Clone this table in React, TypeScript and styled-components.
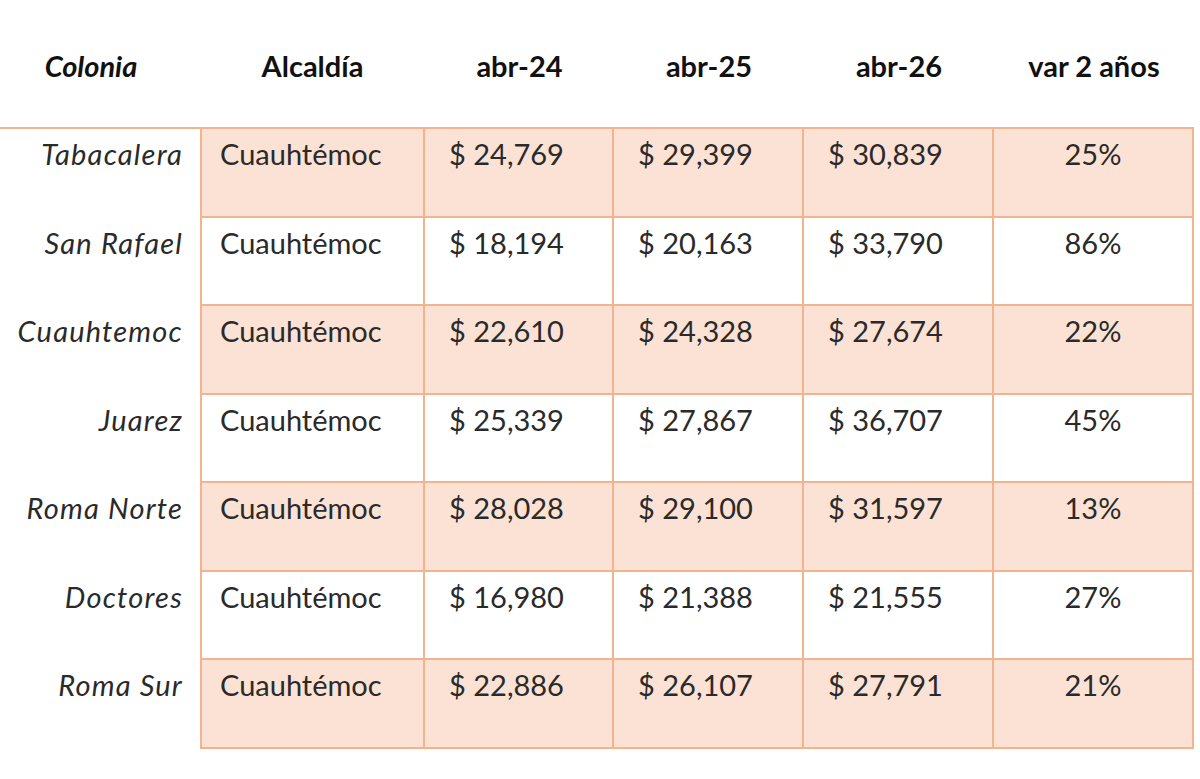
import React from "react";
import styled, { createGlobalStyle, css } from "styled-components";

const Global = createGlobalStyle`
  html, body { margin: 0; padding: 0; background: #ffffff; }
  body { font-family: Lato, "Open Sans", sans-serif; }
`;

const LINE = "#F2B48F";
const FILL = "#FBE2D5";

const Page = styled.div`
  width: 1200px;
  height: 779px;
  background: #fff;
  overflow: hidden;
`;

const Table = styled.div`
  display: grid;
  grid-template-columns: 200px 225px 189px 190px 190px 200px;
  grid-template-rows: 129px repeat(7, 88.5px);
  width: 1194px;
  color: #2a2a2a;
`;

const HeadCell = styled.div<{ $italic?: boolean; $shift?: number }>`
  display: flex;
  align-items: center;
  justify-content: center;
  box-sizing: border-box;
  border-bottom: 2px solid ${LINE};
  padding-top: 4px;
  font-size: 29px;
  font-weight: 700;
  color: #111;
  font-style: ${(p) => (p.$italic ? "italic" : "normal")};
  ${(p) => p.$shift && css`padding-right: ${p.$shift}px;`}
`;

const NameCell = styled.div`
  box-sizing: border-box;
  padding: 7px 17px 0 0;
  text-align: right;
  font-size: 29px;
  font-style: italic;
  letter-spacing: 1.2px;
  line-height: 36px;
`;

const DataCell = styled.div<{ $shade: boolean; $align: "left" | "center"; $first?: boolean; $pad: number }>`
  box-sizing: border-box;
  padding: 7px 0 0 ${(p) => p.$pad}px;
  background: ${(p) => (p.$shade ? FILL : "#fff")};
  border-right: 2px solid ${LINE};
  border-bottom: 2px solid ${LINE};
  ${(p) => p.$first && css`border-left: 2px solid ${LINE};`}
  text-align: ${(p) => p.$align};
  font-size: 29px;
  line-height: 36px;
`;

const rows = [
  ["Tabacalera", "$ 24,769", "$ 29,399", "$ 30,839", "25%"],
  ["San Rafael", "$ 18,194", "$ 20,163", "$ 33,790", "86%"],
  ["Cuauhtemoc", "$ 22,610", "$ 24,328", "$ 27,674", "22%"],
  ["Juarez", "$ 25,339", "$ 27,867", "$ 36,707", "45%"],
  ["Roma Norte", "$ 28,028", "$ 29,100", "$ 31,597", "13%"],
  ["Doctores", "$ 16,980", "$ 21,388", "$ 21,555", "27%"],
  ["Roma Sur", "$ 22,886", "$ 26,107", "$ 27,791", "21%"],
];

export default function App() {
  return (
    <Page>
      <Global />
      <Table>
        <HeadCell $italic $shift={18}>Colonia</HeadCell>
        <HeadCell>Alcaldía</HeadCell>
        <HeadCell>abr-24</HeadCell>
        <HeadCell>abr-25</HeadCell>
        <HeadCell>abr-26</HeadCell>
        <HeadCell>var 2 años</HeadCell>
        {rows.map((r, i) => {
          const shade = i % 2 === 0;
          return (
            <React.Fragment key={r[0]}>
              <NameCell>{r[0]}</NameCell>
              <DataCell $shade={shade} $align="left" $first $pad={18}>Cuauhtémoc</DataCell>
              <DataCell $shade={shade} $align="left" $pad={24}>{r[1]}</DataCell>
              <DataCell $shade={shade} $align="left" $pad={24}>{r[2]}</DataCell>
              <DataCell $shade={shade} $align="left" $pad={24}>{r[3]}</DataCell>
              <DataCell $shade={shade} $align="center" $pad={0}>{r[4]}</DataCell>
            </React.Fragment>
          );
        })}
      </Table>
    </Page>
  );
}
